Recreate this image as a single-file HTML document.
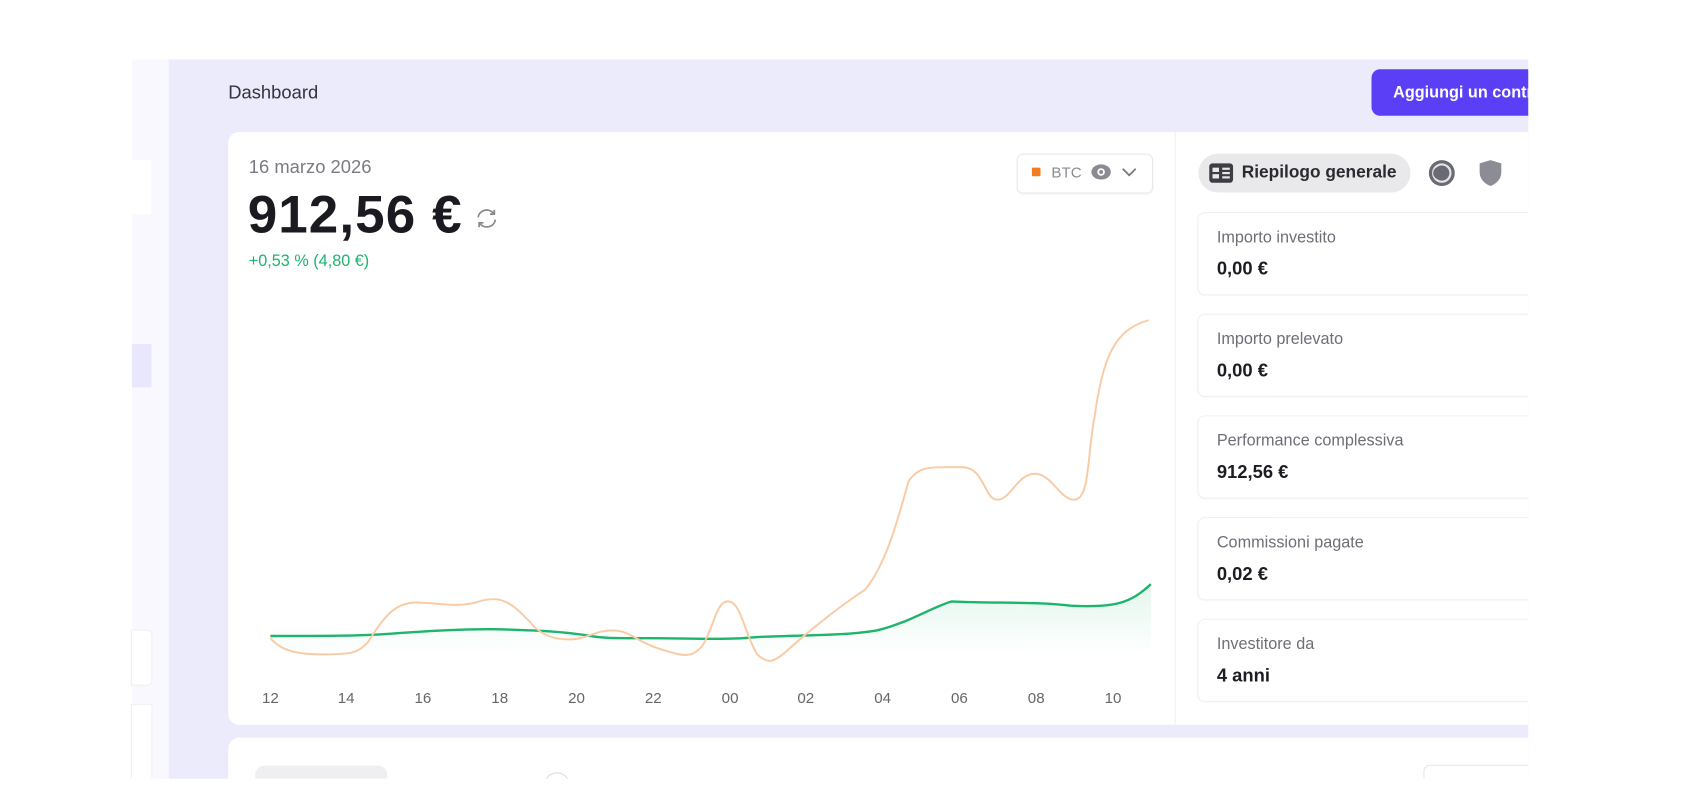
<!DOCTYPE html>
<html><head><meta charset="utf-8"><style>
html,body{margin:0;padding:0;background:#fff;width:1696px;height:802px;overflow:hidden;font-family:"Liberation Sans",sans-serif}
#w{position:absolute;left:0;top:0;width:1568px;height:742px;transform:scale(1.08163);transform-origin:0 0}
.a{position:absolute}
.stat{position:absolute;left:1108px;width:320px;height:75px;background:#fff;border-radius:6px;box-shadow:0 0 0 1px #f0f0f3,0 1px 2px rgba(0,0,0,.05)}
.stat .l{position:absolute;left:17px;top:14px;font-size:15px;color:#6e6e78}
.stat .v{position:absolute;left:17px;top:42px;font-size:17px;font-weight:bold;color:#1c1c22}
</style></head><body><div id="w">
<div class="a" style="left:122px;top:55px;width:34px;height:665px;background:#f8f8fe"></div>
<div class="a" style="left:122px;top:148px;width:18px;height:50px;background:#fff"></div>
<div class="a" style="left:122px;top:318px;width:18px;height:40px;background:#e9e7fb"></div>
<div class="a" style="left:122px;top:583px;width:18px;height:50px;background:#fff;border-radius:0 4px 4px 0;box-shadow:0 0 0 1px #f0f0f4"></div>
<div class="a" style="left:122px;top:652px;width:18px;height:68px;background:#fff;box-shadow:0 0 0 1px #f0f0f4"></div>
<div class="a" style="left:156px;top:55px;width:1257px;height:665px;background:#ebebfb;overflow:hidden">
<div class="a" style="left:55px;top:21px;font-size:17px;color:#33333d">Dashboard</div>
<div class="a" style="left:1112px;top:9px;width:160px;height:43px;background:#5b3ff6;border-radius:8px;color:#fff;font-weight:bold;font-size:15px;line-height:43px;padding-left:20px;white-space:nowrap">Aggiungi un contratto</div>
<div class="a" style="left:55px;top:67px;width:1250px;height:548px;background:#fff;border-radius:10px"></div>
<div class="a" style="left:930px;top:67px;width:1px;height:548px;background:#efeff2"></div>
<div class="a" style="left:55px;top:627px;width:1250px;height:60px;background:#fff;border-radius:10px"></div>
<div class="a" style="left:80px;top:653px;width:122px;height:30px;background:#efeff1;border-radius:8px"></div>
<div class="a" style="left:347px;top:659px;width:22px;height:22px;border:1px solid #ddd;border-radius:50%"></div>
<div class="a" style="left:1160px;top:652px;width:120px;height:40px;border:1px solid #e6e6ea;border-radius:6px"></div>
</div>
<div class="a" style="left:230px;top:145px;font-size:17px;color:#7a7a84">16 marzo 2026</div>
<div class="a" style="left:229px;top:171px;font-size:49px;font-weight:bold;color:#1a1a20;letter-spacing:1px">912,56 €</div>
<svg class="a" style="left:438px;top:190px" width="24" height="24" viewBox="0 0 24 24" fill="none" stroke="#888" stroke-width="1.6"><path d="M4 11a8 8 0 0 1 14-4l1 1M20 13a8 8 0 0 1-14 4l-1-1"/><path d="M19 4v4h-4M5 20v-4h4"/></svg>
<div class="a" style="left:230px;top:233px;font-size:15px;color:#1db46c">+0,53 % (4,80 €)</div>
<div class="a" style="left:940px;top:142px;width:124px;height:35px;border:1px solid #e8e8ec;border-radius:6px;box-shadow:0 1px 2px rgba(0,0,0,.04)"></div>
<div class="a" style="left:954px;top:155px;width:8px;height:8px;background:#f47c20;border-radius:1px"></div>
<div class="a" style="left:972px;top:151px;font-size:14px;color:#8a8a92">BTC</div>
<svg class="a" style="left:1008px;top:150px" width="20" height="18" viewBox="0 0 20 18"><ellipse cx="10" cy="9" rx="9" ry="7" fill="#8a8a92"/><circle cx="10" cy="9" r="3.5" fill="#fff"/><circle cx="10" cy="9" r="1.8" fill="#8a8a92"/></svg>
<svg class="a" style="left:1036px;top:153px" width="16" height="12" viewBox="0 0 16 12" fill="none" stroke="#777" stroke-width="1.6"><path d="M2 3l6 6 6-6"/></svg>
<svg class="a" style="left:0;top:0" width="1568" height="742">
<defs><linearGradient id="g" x1="0" y1="0" x2="0" y2="1"><stop offset="0" stop-color="#1db46c" stop-opacity=".12"/><stop offset="1" stop-color="#1db46c" stop-opacity="0"/></linearGradient></defs>
<path d="M250 588 C300 588 330 588 360 586 C400 583 440 581 470 582 C500 583 520 584 540 587 C555 590 565 590 600 590 C640 590 670 592 700 589 C740 587 780 588 810 583 C840 576 860 562 880 556 C920 558 960 556 990 560 C1030 562 1045 558 1064 540 L1064 605 L250 605 Z" fill="url(#g)"/>
<path d="M250 588 C300 588 330 588 360 586 C400 583 440 581 470 582 C500 583 520 584 540 587 C555 590 565 590 600 590 C640 590 670 592 700 589 C740 587 780 588 810 583 C840 576 860 562 880 556 C920 558 960 556 990 560 C1030 562 1045 558 1064 540" fill="none" stroke="#1db46c" stroke-width="2.2"/>
<path d="M250 590 C260 602 275 605 300 605 C325 605 330 604 340 594 C355 570 365 557 385 557 C405 557 420 562 440 557 C465 548 475 560 490 575 C500 588 515 592 530 591 C545 590 550 582 570 583 C585 585 590 594 610 600 C630 606 640 610 650 596 C660 580 662 556 673 556 C685 556 688 585 700 605 C710 614 715 612 725 604 C740 590 770 565 800 545 C820 520 830 480 840 445 C850 430 860 432 890 432 C910 432 910 462 922 462 C935 462 940 438 957 438 C972 438 980 462 993 462 C1008 462 1005 420 1012 385 C1020 330 1030 305 1062 296" fill="none" stroke="#f9cba5" stroke-width="1.8"/>
<g font-size="14" fill="#666" text-anchor="middle" font-family="Liberation Sans">
<text x="250" y="650">12</text><text x="320" y="650">14</text><text x="391" y="650">16</text><text x="462" y="650">18</text><text x="533" y="650">20</text><text x="604" y="650">22</text><text x="675" y="650">00</text><text x="745" y="650">02</text><text x="816" y="650">04</text><text x="887" y="650">06</text><text x="958" y="650">08</text><text x="1029" y="650">10</text></g>
</svg>
<div class="a" style="left:1108px;top:142px;width:196px;height:36px;background:#e9e9ec;border-radius:18px"></div>
<svg class="a" style="left:1117px;top:150px" width="24" height="20" viewBox="0 0 24 20"><rect x="1" y="1" width="22" height="18" rx="3" fill="#3d3d44"/><rect x="4" y="5" width="6" height="4" fill="#e9e9ec"/><rect x="4" y="11" width="6" height="4" fill="#e9e9ec"/><rect x="13" y="5" width="7" height="2" fill="#e9e9ec"/><rect x="13" y="9" width="7" height="2" fill="#e9e9ec"/><rect x="13" y="13" width="7" height="2" fill="#e9e9ec"/></svg>
<div class="a" style="left:1148px;top:151px;font-size:16px;font-weight:bold;color:#2a2a30">Riepilogo generale</div>
<svg class="a" style="left:1320px;top:147px" width="26" height="26" viewBox="0 0 26 26"><circle cx="13" cy="13" r="12" fill="#6a6a72"/><circle cx="13" cy="13" r="8" fill="none" stroke="#e5e5e8" stroke-width="2"/><circle cx="11" cy="13" r="6" fill="#6a6a72"/></svg>
<svg class="a" style="left:1366px;top:147px" width="24" height="26" viewBox="0 0 24 26"><path d="M12 1 L22 4 V12 C22 19 17 23 12 25 C7 23 2 19 2 12 V4 Z" fill="#8c8c94"/></svg>
<div class="stat" style="top:197px"><div class="l">Importo investito</div><div class="v">0,00 €</div></div>
<div class="stat" style="top:291px"><div class="l">Importo prelevato</div><div class="v">0,00 €</div></div>
<div class="stat" style="top:385px"><div class="l">Performance complessiva</div><div class="v">912,56 €</div></div>
<div class="stat" style="top:479px"><div class="l">Commissioni pagate</div><div class="v">0,02 €</div></div>
<div class="stat" style="top:573px"><div class="l">Investitore da</div><div class="v">4 anni</div></div>
<div class="a" style="left:1413px;top:0;width:155px;height:742px;background:#fff"></div>
<div class="a" style="left:0;top:720px;width:1568px;height:22px;background:#fff"></div>
</div></body></html>
